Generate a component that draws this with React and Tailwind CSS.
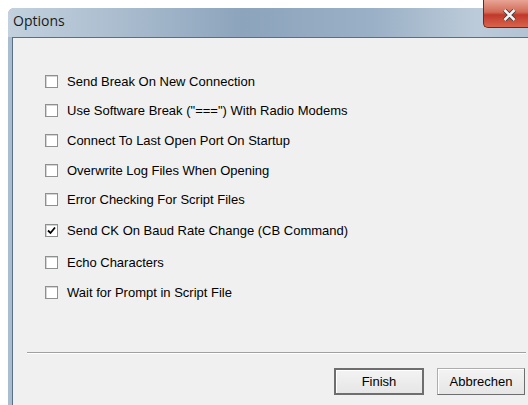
import { useState } from "react";

const OPTIONS = [
  { label: "Send Break On New Connection", checked: false, mt: "mt-[37px]" },
  { label: 'Use Software Break ("===") With Radio Modems', checked: false, mt: "mt-[16px]" },
  { label: "Connect To Last Open Port On Startup", checked: false, mt: "mt-[17px]" },
  { label: "Overwrite Log Files When Opening", checked: false, mt: "mt-[17px]" },
  { label: "Error Checking For Script Files", checked: false, mt: "mt-[16px]" },
  { label: "Send CK On Baud Rate Change (CB Command)", checked: true, mt: "mt-[18px]" },
  { label: "Echo Characters", checked: false, mt: "mt-[19px]" },
  { label: "Wait for Prompt in Script File", checked: false, mt: "mt-[17px]" },
];

function CheckBox({ checked, onClick }) {
  return (
    <button
      onClick={onClick}
      className="w-[13px] h-[13px] shrink-0 border border-[#8e8f8f] bg-white shadow-[inset_1px_1px_0_#d5d5d5] flex items-center justify-center p-0"
    >
      {checked && (
        <svg width="9" height="9" viewBox="0 0 9 9">
          <path d="M1 4.5 L3.5 7 L8 1.5" fill="none" stroke="#000" strokeWidth="1.8" />
        </svg>
      )}
    </button>
  );
}

export default function App() {
  const [opts, setOpts] = useState(OPTIONS.map((o) => o.checked));
  const toggle = (i) => setOpts((p) => p.map((v, j) => (j === i ? !v : v)));

  return (
    <div className="w-[528px] h-[405px] overflow-hidden bg-white pt-[8px] pl-[8px]">
      <div className="h-[397px] rounded-tl-[6px] bg-[#a9bdd1] flex flex-col">
        {/* title bar */}
        <div className="h-[29px] shrink-0 flex items-start justify-between bg-[linear-gradient(90deg,#c3d1de_0%,#a6b9cc_25%,#8ca4bc_45%,#9ab0c6_70%,#bccbd9_90%,#b2c3d4_100%)] rounded-tl-[6px]">
          <span className="pl-[5px] pt-[5px] text-[14px] leading-[16px] text-[#1a1a1a] [font-family:'Open_Sans','Noto_Sans',sans-serif]">
            Options
          </span>
          <div className="-mt-[8px] w-[45px] h-[28px] rounded-bl-[5px] border border-[#6b2a20] border-t-0 border-r-0 bg-[linear-gradient(180deg,#e8a596_0%,#d26a55_45%,#c0392b_55%,#d8644c_100%)] flex items-center justify-center">
            <svg width="15" height="12" viewBox="0 0 15 12" className="mt-[3px] ml-[6px]">
              <path d="M2.5 1 L12.5 11 M12.5 1 L2.5 11" stroke="#3b3b3b" strokeWidth="4.2" />
              <path d="M2.5 1 L12.5 11 M12.5 1 L2.5 11" stroke="#f4f4f4" strokeWidth="2.6" />
            </svg>
          </div>
        </div>

        {/* client area */}
        <div className="flex-1 ml-[4px] bg-[#f0f0f0] border-t border-l border-[#5c6f82] flex flex-col [font-family:'Liberation_Sans',Arial,sans-serif] text-[13px] text-black">
          <div className="flex flex-col pl-[32px]">
            {OPTIONS.map((o, i) => (
              <label key={o.label} className={`${o.mt} flex items-center h-[13px] cursor-default`}>
                <CheckBox checked={opts[i]} onClick={() => toggle(i)} />
                <span className="ml-[9px] whitespace-nowrap leading-[15px]">{o.label}</span>
              </label>
            ))}
          </div>

          <div className="mt-[53px] ml-[14px] mr-[2px] h-[2px] border-t border-[#a0a0a0] border-b border-b-white" />

          <div className="mt-[14px] flex justify-end gap-[13px] pr-[3px]">
            <button className="w-[90px] h-[27px] border-2 border-[#6e6e6e] bg-[linear-gradient(180deg,#f3f3f3,#e6e6e6)] shadow-[inset_1px_1px_0_#fff] text-[13px]">
              Finish
            </button>
            <button className="w-[88px] h-[27px] border border-[#adadad] border-r-[#6e6e6e] border-b-[#6e6e6e] bg-[linear-gradient(180deg,#f3f3f3,#e6e6e6)] shadow-[inset_1px_1px_0_#fff] text-[13px]">
              Abbrechen
            </button>
          </div>
        </div>
      </div>
    </div>
  );
}
